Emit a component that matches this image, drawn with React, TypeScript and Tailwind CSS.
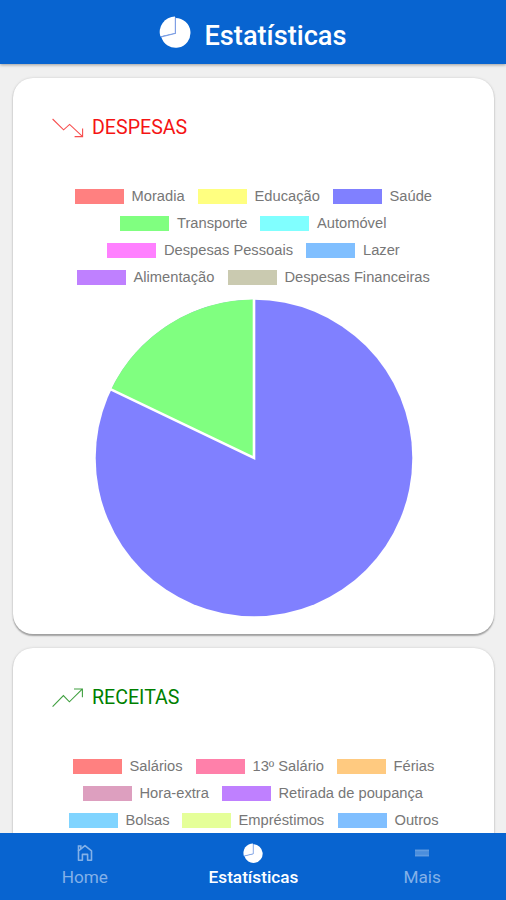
interface LegendItem {
    label: string;
    swatch: string;
    width: string;
}

interface LegendProps {
    rows: LegendItem[][];
}

interface StatCardProps {
    title: string;
    titleClass: string;
    trend: 'up' | 'down';
    rows: LegendItem[][];
    children?: React.ReactNode;
}

const expenseRows: LegendItem[][] = [
    [
        { label: 'Moradia', swatch: 'bg-[#ff8080]', width: 'w-[54px]' },
        { label: 'Educação', swatch: 'bg-[#ffff80]', width: 'w-[66px]' },
        { label: 'Saúde', swatch: 'bg-[#8080ff]', width: 'w-[43px]' },
    ],
    [
        { label: 'Transporte', swatch: 'bg-[#80ff80]', width: 'w-[71px]' },
        { label: 'Automóvel', swatch: 'bg-[#80ffff]', width: 'w-[70px]' },
    ],
    [
        { label: 'Despesas Pessoais', swatch: 'bg-[#ff80ff]', width: 'w-[130px]' },
        { label: 'Lazer', swatch: 'bg-[#80bfff]', width: 'w-[37px]' },
    ],
    [
        { label: 'Alimentação', swatch: 'bg-[#bf80ff]', width: 'w-[82px]' },
        { label: 'Despesas Financeiras', swatch: 'bg-[#cacab0]', width: 'w-[146px]' },
    ],
];

const incomeRows: LegendItem[][] = [
    [
        { label: 'Salários', swatch: 'bg-[#ff8080]', width: 'w-[54px]' },
        { label: '13º Salário', swatch: 'bg-[#ff80aa]', width: 'w-[72px]' },
        { label: 'Férias', swatch: 'bg-[#ffca80]', width: 'w-[41px]' },
    ],
    [
        { label: 'Hora-extra', swatch: 'bg-[#dd9fbf]', width: 'w-[70px]' },
        { label: 'Retirada de poupança', swatch: 'bg-[#bf80ff]', width: 'w-[146px]' },
    ],
    [
        { label: 'Bolsas', swatch: 'bg-[#80d4ff]', width: 'w-[44px]' },
        { label: 'Empréstimos', swatch: 'bg-[#e5ff99]', width: 'w-[87px]' },
        { label: 'Outros', swatch: 'bg-[#80bfff]', width: 'w-[44px]' },
    ],
];

const PieIcon = ({ className }: { className?: string }) => (
    <svg viewBox="0 0 32 32" className={className}>
        <path d="M16 0.6 A15.4 15.4 0 0 0 1.4 20.6 L16.4 17.2 Z" fill="currentColor" />
        <path d="M16.4 2 A14.9 14.9 0 1 1 2.2 20.8 L16.4 17.4 Z" fill="currentColor" />
        <path d="M16.4 1.4 V17.3 L2 20.8" fill="none" stroke="#7f9fe4" strokeWidth="1.2" />
    </svg>
);

const HomeIcon = () => (
    <svg viewBox="0 0 16 18" className="h-[18px] w-4" fill="none" stroke="currentColor" strokeWidth="1.6">
        <path d="M1.5 6.8 L8 1.6 L14.5 6.8 V16.2 H10.6 V10.4 H5.4 V16.2 H1.5 Z" strokeLinejoin="round" />
        <path d="M1.5 7 V2 H3.8 V5" />
    </svg>
);

const MenuIcon = () => (
    <svg viewBox="0 0 16 8" className="h-2 w-4">
        <rect x="1" y="0.5" width="14" height="7" fill="currentColor" opacity="0.55" />
        <path d="M1 1.5 H15 M1 6.5 H15" stroke="currentColor" strokeWidth="1.4" opacity="0.4" />
    </svg>
);

const TrendIcon = ({ trend }: { trend: 'up' | 'down' }) => (
    <svg viewBox="0 0 32 20" className="h-5 w-8" fill="none" stroke="currentColor" strokeWidth="1.1" opacity="0.75">
        {trend === 'down' ? (
            <path d="M0.6 1 L11.6 11.8 L17.6 6.4 L30.4 18.4 M30.6 10.6 V18.6 H22.6" />
        ) : (
            <path d="M0.6 18.6 L11.4 7.6 L17.4 13.8 L30.2 1.2 M22 1 H30.4 V9.2" />
        )}
    </svg>
);

const Legend = ({ rows }: LegendProps) => (
    <div className="flex flex-col gap-3 pt-[50px]">
        {rows.map((row, index) => (
            <div key={index} className="flex h-[15px] items-center justify-center gap-3">
                {row.map((item) => (
                    <div key={item.label} className="flex items-center gap-2">
                        <div className={`h-[15px] w-[49px] ${item.swatch}`} />
                        <span className={`font-['Liberation_Sans',sans-serif] text-[14.7px] leading-[15px] whitespace-nowrap text-[#777] ${item.width}`}>
                            {item.label}
                        </span>
                    </div>
                ))}
            </div>
        ))}
    </div>
);

const ExpensePie = () => (
    <svg viewBox="0 0 320 320" className="mx-auto mt-[13px] h-80 w-80">
        <circle cx="160" cy="160" r="158.3" fill="#8080ff" />
        <path d="M160 160 L17.1 91.5 A158.5 158.5 0 0 1 160 1.5 Z" fill="#80ff80" />
        <path d="M160 0 V160 L15.3 90.6" fill="none" stroke="#fff" strokeWidth="2.6" />
    </svg>
);

const StatCard = ({ title, titleClass, trend, rows, children }: StatCardProps) => (
    <section className="h-[556px] shrink-0 rounded-[20px] bg-white pt-[39px] shadow-[0_1.5px_1.5px_rgba(0,0,0,0.3),0_0_3px_rgba(0,0,0,0.12)]">
        <div className={`flex h-[22px] items-center gap-2 pl-[39px] ${titleClass}`}>
            <TrendIcon trend={trend} />
            <h2 className="text-[19.6px] leading-[22px]">{title}</h2>
        </div>
        <Legend rows={rows} />
        {children}
    </section>
);

export default function App() {
    return (
        <div className="flex h-[900px] w-[506px] flex-col overflow-hidden bg-[#f0f0f0] font-['Roboto',sans-serif]">
            <header className="z-10 flex h-16 shrink-0 justify-center bg-[#0864d0] text-white shadow-[0_1px_3px_rgba(0,0,0,0.35)]">
                <PieIcon className="mt-4 mr-[13px] h-8 w-8" />
                <h1 className="mt-5 text-[27.2px] leading-8 font-medium">Estatísticas</h1>
            </header>

            <main className="flex min-h-0 flex-1 flex-col gap-[13.5px] overflow-hidden pt-[14px] pr-3 pl-[13px]">
                <StatCard title="DESPESAS" titleClass="text-[#f51414]" trend="down" rows={expenseRows}>
                    <ExpensePie />
                </StatCard>
                <StatCard title="RECEITAS" titleClass="text-[#008000]" trend="up" rows={incomeRows} />
            </main>

            <nav className="z-10 grid h-[67px] shrink-0 grid-cols-3 bg-[#0864d0] text-[17.2px] leading-5">
                <div className="flex flex-col items-center pl-px text-[#83b1e8]">
                    <div className="flex h-10 items-center">
                        <HomeIcon />
                    </div>
                    <span className="-mt-1.5">Home</span>
                </div>
                <div className="flex flex-col items-center pl-px text-white">
                    <div className="flex h-10 items-center">
                        <PieIcon className="h-5 w-5" />
                    </div>
                    <span className="-mt-1.5 font-medium">Estatísticas</span>
                </div>
                <div className="flex flex-col items-center pl-px text-[#83b1e8]">
                    <div className="flex h-10 items-center">
                        <MenuIcon />
                    </div>
                    <span className="-mt-1.5">Mais</span>
                </div>
            </nav>
        </div>
    );
}
